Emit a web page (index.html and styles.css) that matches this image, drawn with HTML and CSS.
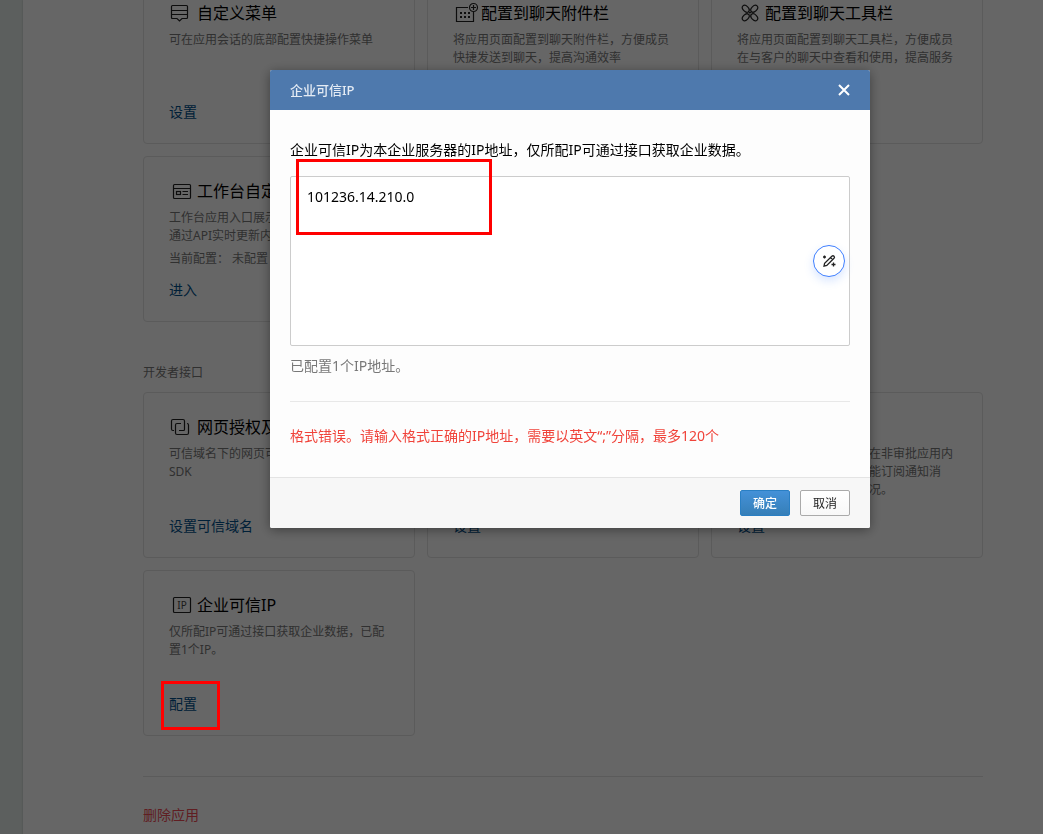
FILE: index.html
```
<!DOCTYPE html>
<html lang="zh-CN">
<head>
    <meta charset="UTF-8">
    <meta name="viewport" content="width=device-width, initial-scale=1.0">
    <title>企业可信IP</title>
    <link rel="stylesheet" href="styles.css">
</head>
<body>
    <main class="page">
        <div class="card-grid card-grid-first">
            <section class="card">
                <h2 class="card-title">
                    <svg class="card-icon" viewBox="0 0 28 24">
                        <path d="M3.5 4.5H17.5Q18.5 4.5 18.5 5.5V16.5Q18.5 17.5 17.5 17.5H13L10.5 20L8 17.5H3.5Q2.5 17.5 2.5 16.5V5.5Q2.5 4.5 3.5 4.5ZM2.5 9.5H18.5M2.5 13.5H18.5"/>
                    </svg>
                    自定义菜单
                </h2>
                <p class="card-desc">可在应用会话的底部配置快捷操作菜单</p>
                <a class="card-link" href="#">设置</a>
            </section>

            <section class="card">
                <h2 class="card-title">
                    <svg class="card-icon" viewBox="0 0 28 24">
                        <path d="M15 6.5H3.5V20.5H20.5V11"/>
                        <circle cx="20.5" cy="6.5" r="4"/>
                        <path d="M18 6.5H23M20.5 4V9"/>
                        <path stroke-width="2" d="M7 12H9M11 12H13M15 12H17M7 16H9M11 16H13M15 16H17"/>
                    </svg>
                    配置到聊天附件栏
                </h2>
                <p class="card-desc">将应用页面配置到聊天附件栏，方便成员快捷发送到聊天，提高沟通效率</p>
                <a class="card-link" href="#">配置</a>
            </section>

            <section class="card">
                <h2 class="card-title">
                    <svg class="card-icon" viewBox="0 0 28 24">
                        <g transform="translate(13 12) rotate(45)">
                            <ellipse cx="-6" cy="0" rx="4" ry="2.7"/>
                            <ellipse cx="6" cy="0" rx="4" ry="2.7"/>
                            <ellipse cx="0" cy="-6" rx="2.7" ry="4"/>
                            <ellipse cx="0" cy="6" rx="2.7" ry="4"/>
                            <path d="M-2 0H2M0 -2V2"/>
                        </g>
                    </svg>
                    配置到聊天工具栏
                </h2>
                <p class="card-desc">将应用页面配置到聊天工具栏，方便成员在与客户的聊天中查看和使用，提高服务</p>
                <a class="card-link" href="#">配置</a>
            </section>

            <section class="card">
                <h2 class="card-title">
                    <svg class="card-icon" viewBox="0 0 28 24">
                        <rect x="4.5" y="5.5" width="17" height="14" rx="1"/>
                        <path d="M4.5 9.5H21.5M13.5 12.5H19M13.5 15.5H19"/>
                        <rect x="7.5" y="12.5" width="4" height="3"/>
                    </svg>
                    工作台自定义展示
                </h2>
                <p class="card-desc">工作台应用入口展示自定义的内容，可<br>通过API实时更新内容</p>
                <p class="card-status">当前配置： 未配置</p>
                <a class="card-link" href="#">进入</a>
            </section>
        </div>

        <h3 class="group-title">开发者接口</h3>
        <div class="card-grid">
            <section class="card">
                <h2 class="card-title">
                    <svg class="card-icon" viewBox="0 0 28 24">
                        <path d="M5 15.5H4Q2.5 15.5 2.5 14V6Q2.5 4.5 4 4.5H14Q15.5 4.5 15.5 6V14.5Q15.5 15.5 14.5 15.5H10"/>
                        <path d="M18 8.5Q19.5 8.5 19.5 10V18Q19.5 19.5 18 19.5H8Q6.5 19.5 6.5 18V10Q6.5 8.5 8 8.5H12"/>
                    </svg>
                    网页授权及JS-SDK
                </h2>
                <p class="card-desc">可信域名下的网页可使用网页授权及JS-<br>SDK</p>
                <a class="card-link" href="#">设置可信域名</a>
            </section>

            <section class="card">
                <h2 class="card-title">企业微信授权登录</h2>
                <p class="card-desc">使用企业微信帐号登录网页或应用</p>
                <a class="card-link" href="#">设置</a>
            </section>

            <section class="card">
                <h2 class="card-title">审批接口</h2>
                <p class="card-desc">成员可使用审批流程引擎在非审批应用内<br>设置流程、提交申请，且能订阅通知消<br>息，及时了解审批进展情况。</p>
                <a class="card-link" href="#">设置</a>
            </section>

            <section class="card">
                <h2 class="card-title">
                    <svg class="card-icon" viewBox="0 0 28 24">
                        <rect x="4.5" y="4.5" width="17" height="15" rx="1"/>
                        <text x="13" y="16" text-anchor="middle">IP</text>
                    </svg>
                    企业可信IP
                </h2>
                <p class="card-desc">仅所配IP可通过接口获取企业数据，已配置1个IP。</p>
                <a class="card-link" href="#">配置<span class="mark mark-link"></span></a>
            </section>
        </div>

        <div class="page-footer">
            <a class="delete-link" href="#">删除应用</a>
        </div>
    </main>

    <div class="overlay">
        <div class="dialog" role="dialog" aria-labelledby="dialogTitle">
            <div class="dialog-header">
                <h1 id="dialogTitle">企业可信IP</h1>
                <button class="close-btn" type="button" aria-label="关闭">
                    <svg viewBox="0 0 12 12"><path d="M1 1L11 11M11 1L1 11"/></svg>
                </button>
            </div>

            <div class="dialog-body">
                <label for="ipList">企业可信IP为本企业服务器的IP地址，仅所配IP可通过接口获取企业数据。</label>
                <div class="ip-field">
                    <textarea id="ipList" spellcheck="false">101236.14.210.0</textarea>
                    <button class="assist-btn" type="button" aria-label="智能填写">
                        <svg viewBox="0 0 16 16">
                            <path d="M3 13.2L3.6 10.4L10.8 3.2Q12 2.2 13 3.2Q14 4.2 13 5.3L5.8 12.5ZM9.6 4.6L11.6 6.6"/>
                            <path d="M3.5 2.5V5.5M2 4H5M12.5 9.5V13.5M10.5 11.5H14.5"/>
                        </svg>
                    </button>
                    <span class="mark mark-field"></span>
                </div>
                <p class="ip-count">已配置1个IP地址。</p>
                <p class="error">格式错误。请输入格式正确的IP地址，需要以英文“;”分隔，最多120个</p>
            </div>

            <div class="dialog-footer">
                <button class="btn btn-primary" type="button">确定</button>
                <button class="btn" type="button">取消</button>
            </div>
        </div>
    </div>
</body>
</html>
```
FILE: styles.css
```
* {
    margin: 0;
    padding: 0;
    box-sizing: border-box;
}

body {
    font-family: "Noto Sans", "Noto Sans CJK SC", sans-serif;
    font-size: 14px;
    line-height: 20px;
    color: #000;
    background: #e6edea;
    min-height: 100vh;
    overflow: hidden;
}

a {
    text-decoration: none;
}

button,
textarea {
    font-family: inherit;
}

.page {
    margin-left: 23px;
    padding: 0 60px 0 120px;
    min-height: 100vh;
    background: #fff;
    box-shadow: 0 0 2px rgba(0, 0, 0, 0.2);
}

.card-grid {
    display: grid;
    grid-template-columns: repeat(3, 1fr);
    grid-auto-rows: minmax(166px, auto);
    gap: 12px;
}

/* the list is scrolled a little under the top edge */
.card-grid-first {
    transform: translateY(-22px);
    margin-bottom: -22px;
}

.card {
    display: flex;
    flex-direction: column;
    align-items: flex-start;
    padding: 22px 26px 21px 25px;
    border: 1px solid #e4e4e4;
    border-radius: 4px;
}

.card-title {
    display: flex;
    align-items: center;
    height: 24px;
    margin-bottom: 6px;
    font-size: 16px;
    font-weight: 400;
    white-space: nowrap;
}

.card-icon {
    width: 28px;
    height: 24px;
    fill: none;
    stroke: #222;
    stroke-width: 1.2;
}

.card-icon text {
    fill: #444;
    stroke: none;
    font-size: 10px;
}

.card-desc,
.card-status {
    color: #787878;
    font-size: 12px;
    line-height: 18px;
}

.card-status {
    margin-top: 5px;
}

.card-link {
    position: relative;
    margin-top: auto;
    color: #00508c;
}

.group-title {
    margin: 41px 0 9px;
    color: #787878;
    font-size: 12px;
    font-weight: 400;
}

.page-footer {
    margin-top: 40px;
    padding: 28px 0;
    border-top: 1px solid #e4e4e4;
}

.delete-link {
    color: #ef4b56;
}

.overlay {
    position: fixed;
    inset: 0;
    z-index: 10;
    padding: 70px 173px 0 270px;
    background: rgba(0, 0, 0, 0.6);
}

.dialog {
    background: #fdfdfd;
    border-radius: 2px;
    box-shadow: 0 2px 12px rgba(0, 0, 0, 0.4);
}

.dialog-header {
    display: flex;
    align-items: center;
    justify-content: space-between;
    height: 40px;
    padding: 0 20px;
    color: #e4ebf4;
    background: #4e79ad;
    border-radius: 2px 2px 0 0;
}

.dialog-header h1 {
    font-size: 13px;
    font-weight: 500;
}

.close-btn {
    display: flex;
    border: none;
    background: none;
    cursor: pointer;
}

.close-btn svg {
    width: 12px;
    height: 12px;
    fill: none;
    stroke: #fff;
    stroke-width: 2;
}

.dialog-body {
    padding: 30px 20px 31px;
}

.dialog-body label {
    display: block;
    margin-bottom: 16px;
}

.ip-field {
    position: relative;
}

.ip-field textarea {
    display: block;
    width: 100%;
    height: 170px;
    padding: 10px 16px;
    border: 1px solid #ccc;
    border-radius: 2px;
    background: #fff;
    color: #000;
    font-size: 14px;
    line-height: 20px;
    resize: none;
    outline: none;
}

.assist-btn {
    position: absolute;
    right: 5px;
    top: 69px;
    display: flex;
    align-items: center;
    justify-content: center;
    width: 32px;
    height: 32px;
    border: 1px solid #4080ff;
    border-radius: 50%;
    background: #fff;
    box-shadow: 0 4px 10px rgba(64, 128, 255, 0.2);
    cursor: pointer;
}

.assist-btn svg {
    width: 16px;
    height: 16px;
    fill: none;
    stroke: #222;
    stroke-width: 1.3;
}

.ip-count {
    margin-top: 10px;
    padding-bottom: 25px;
    border-bottom: 1px solid #e8e8e8;
    color: #787878;
}

.error {
    margin-top: 24px;
    color: #f0433a;
}

.dialog-footer {
    display: flex;
    justify-content: flex-end;
    gap: 10px;
    padding: 12px 20px;
    border-top: 1px solid #e4e4e4;
    background: #f7f7f7;
    border-radius: 0 0 2px 2px;
}

.btn {
    width: 50px;
    height: 26px;
    border: 1px solid #aaa;
    border-radius: 2px;
    background: linear-gradient(#fff, #f8f8f8);
    color: #222;
    font-size: 12px;
    cursor: pointer;
}

.btn-primary {
    border-color: #2a7fc4;
    background: linear-gradient(#4491d8, #367fb8);
    color: #fff;
    font-weight: 500;
}

/* red highlight frames */
.mark {
    position: absolute;
    z-index: 20;
    border: 3px solid #f00;
    pointer-events: none;
}

.mark-link {
    top: -13px;
    left: -8px;
    width: 59px;
    height: 49px;
}

.mark-field {
    top: -17px;
    left: 6px;
    width: 196px;
    height: 76px;
}
```
